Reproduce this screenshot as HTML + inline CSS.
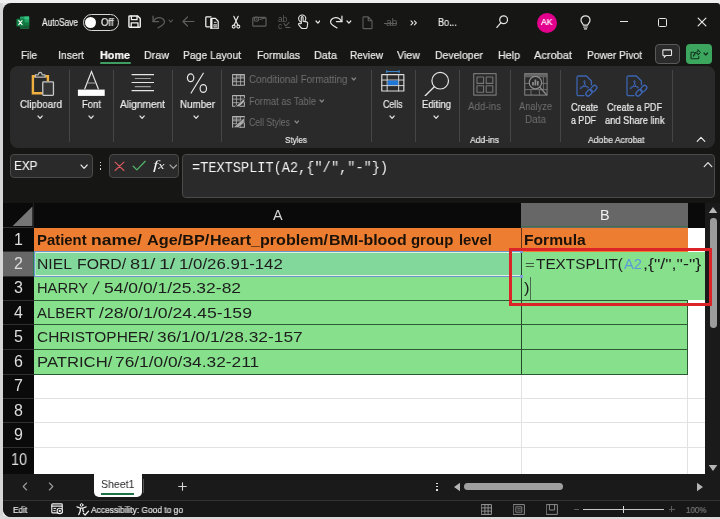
<!DOCTYPE html><html><head><meta charset="utf-8"><title>Excel</title><style>

html,body{margin:0;padding:0;}
body{width:720px;height:519px;overflow:hidden;background:#e6e6e6;position:relative;
font-family:"Liberation Sans",sans-serif;}
#r div,#r svg,#r span.t{position:absolute;box-sizing:border-box;}
#r span.t{white-space:pre;transform-origin:0 50%;display:block;line-height:1;will-change:transform;}

</style></head><body><div id="r">
<div style="left:0px;top:0px;width:720px;height:3px;background:#efefef;"></div>
<div style="left:0px;top:3px;width:3.2px;height:516px;background:#d6d6d6;"></div>
<div style="left:0px;top:516px;width:720px;height:3px;background:#dadada;"></div>
<div style="left:3px;top:2.6px;width:717px;height:514px;background:#161714;border-radius:8px 3px 0 8px;"></div>
<div style="left:10px;top:65.8px;width:705.2px;height:81.8px;background:#2a2a2a;border-radius:8px;"></div>
<div style="left:68.5px;top:70px;width:1px;height:72px;background:#454545;"></div>
<div style="left:113.3px;top:70px;width:1px;height:72px;background:#454545;"></div>
<div style="left:172px;top:70px;width:1px;height:72px;background:#454545;"></div>
<div style="left:221.3px;top:70px;width:1px;height:72px;background:#454545;"></div>
<div style="left:370.5px;top:70px;width:1px;height:72px;background:#454545;"></div>
<div style="left:414.5px;top:70px;width:1px;height:72px;background:#454545;"></div>
<div style="left:459px;top:70px;width:1px;height:72px;background:#454545;"></div>
<div style="left:510px;top:70px;width:1px;height:72px;background:#454545;"></div>
<div style="left:560px;top:70px;width:1px;height:72px;background:#454545;"></div>
<div style="left:672px;top:70px;width:1px;height:72px;background:#454545;"></div>
<div style="left:10px;top:154px;width:82.5px;height:24px;background:#2a2a2a;border:1px solid #4a4a4a;border-radius:4px;"></div>
<div style="left:109px;top:154px;width:70px;height:24px;background:#2a2a2a;border:1px solid #4a4a4a;border-radius:4px;"></div>
<div style="left:182px;top:154px;width:533.2px;height:44px;background:#2a2a2a;border:1px solid #4a4a4a;border-radius:4px;"></div>
<div style="left:99.7px;top:161.6px;width:1.6px;height:1.6px;background:#dcdcdc;"></div>
<div style="left:99.7px;top:164.9px;width:1.6px;height:1.6px;background:#dcdcdc;"></div>
<div style="left:99.7px;top:168.2px;width:1.6px;height:1.6px;background:#dcdcdc;"></div>
<div style="left:3px;top:203px;width:702px;height:24.5px;background:#0a0a0a;"></div>
<div style="left:3px;top:203px;width:31px;height:271px;background:#0a0a0a;"></div>
<div style="left:705px;top:203px;width:15px;height:271px;background:#1a1a1a;"></div>
<svg style="left:11.6px;top:205.6px;" width="21" height="20.4" viewBox="0 0 21 20.4" fill="none" stroke-linecap="round" stroke-linejoin="round"><path d="M20.4 0.4 L20.4 20 L0.6 20 Z" fill="#767676"/></svg>
<div style="left:33px;top:203px;width:1px;height:24.5px;background:#222;"></div>
<div style="left:3px;top:227px;width:31px;height:1px;background:#303030;"></div>
<div style="left:521px;top:203px;width:166.5px;height:24.5px;background:#676767;"></div>
<div style="left:521px;top:226.3px;width:166.5px;height:1.2px;background:#3f6f50;"></div>
<div style="left:3px;top:251.6px;width:31px;height:24.400000000000006px;background:#676767;"></div>
<div style="left:33px;top:251.6px;width:1.2px;height:24.400000000000006px;background:#2f7d4f;"></div>
<div style="left:3px;top:251.1px;width:31px;height:1px;background:#303030;"></div>
<div style="left:3px;top:275.5px;width:31px;height:1px;background:#303030;"></div>
<div style="left:3px;top:299.8px;width:31px;height:1px;background:#303030;"></div>
<div style="left:3px;top:324.3px;width:31px;height:1px;background:#303030;"></div>
<div style="left:3px;top:348.8px;width:31px;height:1px;background:#303030;"></div>
<div style="left:3px;top:373.5px;width:31px;height:1px;background:#303030;"></div>
<div style="left:3px;top:397.8px;width:31px;height:1px;background:#303030;"></div>
<div style="left:3px;top:422.4px;width:31px;height:1px;background:#303030;"></div>
<div style="left:3px;top:446.9px;width:31px;height:1px;background:#303030;"></div>
<div style="left:34px;top:227.5px;width:671px;height:246.5px;background:#fff;"></div>
<div style="left:34px;top:397.8px;width:671px;height:1px;background:#e2e2e2;"></div>
<div style="left:34px;top:422.4px;width:671px;height:1px;background:#e2e2e2;"></div>
<div style="left:34px;top:446.9px;width:671px;height:1px;background:#e2e2e2;"></div>
<div style="left:520.5px;top:374px;width:1px;height:100px;background:#e2e2e2;"></div>
<div style="left:687.0px;top:227.5px;width:1px;height:246.5px;background:#e2e2e2;"></div>
<div style="left:34px;top:227.5px;width:653.5px;height:24.099999999999994px;background:#ed7d31;"></div>
<div style="left:34px;top:251.6px;width:653.5px;height:122.4px;background:#86e08c;"></div>
<div style="left:34px;top:251.6px;width:487px;height:24.400000000000006px;background:#82d79a;"></div>
<div style="left:521px;top:251.6px;width:184px;height:48.70000000000002px;background:#86e08c;"></div>
<div style="left:34px;top:300px;width:653.5px;height:1px;background:#2c5a33;"></div>
<div style="left:34px;top:324.4px;width:653.5px;height:1px;background:#2c5a33;"></div>
<div style="left:34px;top:349px;width:653.5px;height:1px;background:#2c5a33;"></div>
<div style="left:34px;top:373.6px;width:653.5px;height:1px;background:#2c5a33;"></div>
<div style="left:521px;top:251.6px;width:1px;height:122.4px;background:#24482a;"></div>
<div style="left:687px;top:300px;width:1px;height:74.4px;background:#2c5a33;"></div>
<div style="left:34px;top:250.8px;width:487.5px;height:26.4px;border:1.1px solid #6f93cf;border-right:none;"></div>
<div style="left:35px;top:251.9px;width:486px;height:24.2px;border:1px solid rgba(255,255,255,0.72);border-right:none;border-left:1px solid rgba(255,255,255,0.3);"></div>
<div style="left:521px;top:227.5px;width:1px;height:24.099999999999994px;background:#6b3414;"></div>
<div style="left:519.8px;top:250.6px;width:2.8px;height:2.8px;background:#7d9fd6;"></div>
<div style="left:519.8px;top:275.1px;width:2.8px;height:2.8px;background:#7d9fd6;"></div>
<div style="left:530px;top:277px;width:1px;height:23px;background:#4d6b50;"></div>
<div style="left:709.8px;top:217.5px;width:6.8px;height:110px;background:#9c9c9c;border-radius:3.4px;"></div>
<svg style="left:708px;top:206px;" width="10" height="8" viewBox="0 0 10 8" fill="none" stroke-linecap="round" stroke-linejoin="round"><path d="M5 1 L9.3 7 L0.7 7 Z" fill="#b5b5b5"/></svg>
<svg style="left:708px;top:464px;" width="10" height="8" viewBox="0 0 10 8" fill="none" stroke-linecap="round" stroke-linejoin="round"><path d="M5 7 L9.3 1 L0.7 1 Z" fill="#b5b5b5"/></svg>
<div style="left:3px;top:474px;width:717px;height:26.5px;background:#1a1a1a;"></div>
<div style="left:3px;top:500px;width:717px;height:16.6px;background:#171717;border-radius:0 0 0 8px;"></div>
<div style="left:3px;top:500px;width:717px;height:1px;background:#333;"></div>
<div style="left:94px;top:474px;width:47.5px;height:22.5px;background:#fff;border-radius:0 0 5px 5px;"></div>
<div style="left:100.5px;top:493.3px;width:33.5px;height:1.6px;background:#1e7145;"></div>
<div style="left:143px;top:479px;width:1px;height:14px;background:#555;"></div>
<div style="left:464px;top:483px;width:99px;height:7.2px;background:#a0a0a0;border-radius:3.6px;"></div>
<svg style="left:453px;top:482px;" width="8" height="10" viewBox="0 0 8 10" fill="none" stroke-linecap="round" stroke-linejoin="round"><path d="M7 0.7 L7 9.3 L1 5 Z" fill="#b5b5b5"/></svg>
<svg style="left:696px;top:482px;" width="8" height="10" viewBox="0 0 8 10" fill="none" stroke-linecap="round" stroke-linejoin="round"><path d="M1 0.7 L1 9.3 L7 5 Z" fill="#b5b5b5"/></svg>
<div style="left:436.3px;top:482.6px;width:1.6px;height:1.6px;background:#e0e0e0;"></div>
<div style="left:436.3px;top:485.8px;width:1.6px;height:1.6px;background:#e0e0e0;"></div>
<div style="left:436.3px;top:489px;width:1.6px;height:1.6px;background:#e0e0e0;"></div>
<svg style="left:15.6px;top:15.6px;" width="14" height="13.2" viewBox="0 0 15 15" fill="none" stroke-linecap="round" stroke-linejoin="round"><rect x="4" y="0.5" width="10.5" height="14" rx="1.2" fill="#21a366"/><rect x="9.2" y="0.5" width="5.3" height="3.6" fill="#33c481"/><rect x="9.2" y="4.1" width="5.3" height="3.5" fill="#21a366"/><rect x="4" y="4.1" width="5.2" height="3.5" fill="#107c41"/><rect x="4" y="7.6" width="10.5" height="6.9" fill="#185c37"/><rect x="9.2" y="7.6" width="5.3" height="3.4" fill="#107c41"/><rect x="0" y="3" width="9" height="9" rx="1" fill="#107c41"/><path d="M2.6 5.2 L6.4 9.8 M6.4 5.2 L2.6 9.8" stroke="#fff" stroke-width="1.3"/></svg>
<div style="left:83px;top:14px;width:35.5px;height:17px;border:1.2px solid #d8d8d8;border-radius:8.5px;"></div>
<div style="left:85.2px;top:17px;width:11px;height:11px;background:#fff;border-radius:50%;"></div>
<svg style="left:128px;top:15.4px;" width="13.2" height="13.2" viewBox="0 0 14 14" fill="none" stroke-linecap="round" stroke-linejoin="round"><path d="M1 1.8 Q1 1 1.8 1 H10.3 L13 3.7 V12.2 Q13 13 12.2 13 H1.8 Q1 13 1 12.2 Z" stroke="#f2f2f2" stroke-width="1.5"/><path d="M3.6 1.2 V5 H9.6 V1.2" stroke="#f2f2f2" stroke-width="1.4"/><path d="M3.4 13 V8.4 H10.6 V13" stroke="#f2f2f2" stroke-width="1.4"/></svg>
<svg style="left:151px;top:14.4px;" width="15" height="15" viewBox="0 0 15 15" fill="none" stroke-linecap="round" stroke-linejoin="round"><path d="M2.05 2 V7.5 H7.55" stroke="#5e5e5e" stroke-width="1.25" stroke-linejoin="miter"/><path d="M2.3 7.3 C4 4.6 6.4 3.4 8.6 3.6 C12 3.9 14.2 6.6 13.2 9 C12.2 11.2 9.4 12.6 7.1 13.9" stroke="#5e5e5e" stroke-width="1.25"/></svg>
<svg style="left:168.2px;top:19.4px;" width="5.6" height="4" viewBox="0 0 5.6 4" fill="none" stroke-linecap="round" stroke-linejoin="round"><path d="M1 1 L2.8 3 L4.6 1" stroke="#5e5e5e" stroke-width="1.1"/></svg>
<svg style="left:182px;top:16.4px;" width="13" height="11" viewBox="0 0 13 11" fill="none" stroke-linecap="round" stroke-linejoin="round"><path d="M1 5.5 H12 M5.5 1 L1 5.5 L5.5 10" stroke="#5e5e5e" stroke-width="1.2"/></svg>
<svg style="left:205.4px;top:15.7px;" width="14" height="13.6" viewBox="0 0 14 13.6" fill="none" stroke-linecap="round" stroke-linejoin="round"><path d="M6 0.8 H1.6 Q0.8 0.8 0.8 1.6 V10 Q0.8 10.8 1.6 10.8 H4.4" stroke="#f0f0f0" stroke-width="1.25"/><path d="M5.8 3.2 Q5.8 2.4 6.6 2.4 H10.4 L13.2 5.2 V12 Q13.2 12.8 12.4 12.8 H6.6 Q5.8 12.8 5.8 12 Z" stroke="#f0f0f0" stroke-width="1.25" fill="#161714"/><rect x="5.8" y="2.6" width="1.7" height="10" fill="#f0f0f0"/><path d="M9.4 6.3 H11.2" stroke="#e0e0e0" stroke-width="1"/><rect x="8.4" y="8.3" width="3.6" height="3.2" fill="#dcdcdc"/><path d="M8.4 9.9 H12" stroke="#333" stroke-width="0.8" stroke-linecap="butt"/></svg>
<svg style="left:230.8px;top:15.0px;" width="10" height="14.5" viewBox="0 0 10 14.5" fill="none" stroke-linecap="round" stroke-linejoin="round"><path d="M2.9 1.4 L6.7 9.8 M7.1 1.4 L3.3 9.8" stroke="#e6e6e6" stroke-width="1.2"/><circle cx="2.7" cy="11.6" r="1.5" stroke="#e6e6e6" stroke-width="1.1"/><circle cx="7.3" cy="11.6" r="1.5" stroke="#e6e6e6" stroke-width="1.1"/></svg>
<svg style="left:252px;top:15.4px;" width="15" height="12" viewBox="0 0 15 12" fill="none" stroke-linecap="round" stroke-linejoin="round"><rect x="0.8" y="2.4" width="13.2" height="8.8" rx="1" stroke="#5e5e5e" stroke-width="1.2"/><path d="M8 4.5 L13.5 2.8" stroke="#5e5e5e" stroke-width="1.1"/><circle cx="4.4" cy="4.2" r="2.1" stroke="#5e5e5e" stroke-width="1.1" fill="#161714"/><circle cx="4.4" cy="4.2" r="0.7" fill="#5e5e5e"/></svg>
<span class="t" style="left:278px;top:15px;font-size:8.5px;color:#5e5e5e;letter-spacing:-0.2px">ab</span>
<span class="t" style="left:278px;top:22px;font-size:8.5px;color:#5e5e5e">c</span>
<svg style="left:283px;top:21.4px;" width="8" height="8" viewBox="0 0 8 8" fill="none" stroke-linecap="round" stroke-linejoin="round"><path d="M1 2.5 L2.8 5 L6 1.5 M3 6.5 H7" stroke="#5e5e5e" stroke-width="1.1"/></svg>
<svg style="left:297px;top:13.9px;" width="12" height="15.5" viewBox="0 0 12 15.5" fill="none" stroke-linecap="round" stroke-linejoin="round"><circle cx="5.2" cy="4.6" r="3.6" stroke="#e6e6e6" stroke-width="1.1"/><path d="M4.3 9.5 V3.6 Q4.3 2.6 5.2 2.6 Q6.1 2.6 6.1 3.6 V7.2 L9.6 7.9 Q10.8 8.2 10.7 9.4 L10.2 13 Q10 14.6 8.4 14.6 H6 Q4.8 14.6 4 13.6 L1.6 10.6 Q1.2 9.8 2 9.4 Q2.8 9.1 3.4 9.8 Z" stroke="#e6e6e6" stroke-width="1.1" fill="#161714"/></svg>
<svg style="left:314.6px;top:19.85px;" width="5.8" height="4.1" viewBox="0 0 5.8 4.1" fill="none" stroke-linecap="round" stroke-linejoin="round"><path d="M1 1 L2.9 3.1 L4.8 1" stroke="#e6e6e6" stroke-width="1.2"/></svg>
<svg style="left:329px;top:14.4px;" width="15" height="15" viewBox="0 0 15 15" fill="none" stroke-linecap="round" stroke-linejoin="round"><path d="M12.95 2 V7.5 H7.45" stroke="#e6e6e6" stroke-width="1.25" stroke-linejoin="miter"/><path d="M12.7 7.3 C11 4.6 8.6 3.4 6.4 3.6 C3 3.9 0.8 6.6 1.8 9 C2.8 11.2 5.6 12.6 7.9 13.9" stroke="#e6e6e6" stroke-width="1.25"/></svg>
<svg style="left:346.1px;top:19.85px;" width="5.8" height="4.1" viewBox="0 0 5.8 4.1" fill="none" stroke-linecap="round" stroke-linejoin="round"><path d="M1 1 L2.9 3.1 L4.8 1" stroke="#e6e6e6" stroke-width="1.2"/></svg>
<svg style="left:361.6px;top:16.0px;" width="11" height="13.5" viewBox="0 0 11 13.5" fill="none" stroke-linecap="round" stroke-linejoin="round"><path d="M1 1.6 Q1 0.9 1.7 0.9 H6.2 L10 4.8 V11.9 Q10 12.6 9.3 12.6 H1.7 Q1 12.6 1 11.9 Z M6.2 0.9 V4.8 H10" stroke="#5e5e5e" stroke-width="1.1"/></svg>
<span class="t" style="left:386px;top:17.4px;font-size:10.5px;color:#5e5e5e;letter-spacing:-0.3px">ab</span>
<div style="left:384px;top:23px;width:13px;height:1px;background:#5e5e5e;"></div>
<svg style="left:410px;top:20.1px;" width="8" height="6" viewBox="0 0 8 6" fill="none" stroke-linecap="round" stroke-linejoin="round"><path d="M1 0.9 L3 2.9 L1 4.9 M4.4 0.9 L6.4 2.9 L4.4 4.9" stroke="#e6e6e6" stroke-width="1.1"/></svg>
<svg style="left:495.5px;top:14.9px;" width="12.5" height="13.5" viewBox="0 0 12.5 13.5" fill="none" stroke-linecap="round" stroke-linejoin="round"><circle cx="7.6" cy="4.8" r="3.9" stroke="#e6e6e6" stroke-width="1.2"/><path d="M4.8 7.8 L0.9 12.4" stroke="#e6e6e6" stroke-width="1.3"/></svg>
<div style="left:537px;top:12.5px;width:20px;height:20px;background:#e3008c;border-radius:50%;"></div>
<svg style="left:579.6px;top:14.6px;" width="11" height="15" viewBox="0 0 11 15" fill="none" stroke-linecap="round" stroke-linejoin="round"><path d="M3.4 10.2 C3.2 8.6 1 7.6 1 5.2 C1 2.6 3 0.8 5.5 0.8 C8 0.8 10 2.6 10 5.2 C10 7.6 7.8 8.6 7.6 10.2 Z" stroke="#e6e6e6" stroke-width="1.2"/><path d="M3.6 12 H7.4 M4.4 13.9 H6.6" stroke="#e6e6e6" stroke-width="1.1"/></svg>
<div style="left:619.7px;top:21.1px;width:8.4px;height:1.2px;background:#e6e6e6;"></div>
<div style="left:658.2px;top:17.6px;width:9.3px;height:9.3px;border:1.3px solid #e6e6e6;border-radius:1.6px;"></div>
<svg style="left:697.3px;top:17.3px;" width="10" height="10" viewBox="0 0 10 10" fill="none" stroke-linecap="round" stroke-linejoin="round"><path d="M1.1 1.1 L8.9 8.9 M8.9 1.1 L1.1 8.9" stroke="#e6e6e6" stroke-width="1.25"/></svg>
<div style="left:100px;top:62px;width:30.5px;height:1.8px;background:#3f9f63;border-radius:1px;"></div>
<div style="left:654.5px;top:44px;width:25.5px;height:19.5px;background:#2b2b2b;border:1px solid #5a5a5a;border-radius:4px;"></div>
<svg style="left:662.2px;top:49px;" width="10.4" height="9.6" viewBox="0 0 12 11" fill="none" stroke-linecap="round" stroke-linejoin="round"><path d="M1.6 1 H10.4 Q11 1 11 1.6 V6.8 Q11 7.4 10.4 7.4 H4.6 L2.6 9.6 V7.4 H1.6 Q1 7.4 1 6.8 V1.6 Q1 1 1.6 1 Z" stroke="#e6e6e6" stroke-width="1.25"/></svg>
<div style="left:686px;top:44px;width:26px;height:19.6px;background:#3ca65e;border-radius:4px;"></div>
<svg style="left:690px;top:47.5px;" width="11" height="12" viewBox="0 0 11 12" fill="none" stroke-linecap="round" stroke-linejoin="round"><path d="M4.2 4.2 H1.8 Q1 4.2 1 5 V10 Q1 10.8 1.8 10.8 H8 Q8.8 10.8 8.8 10 V8.6" stroke="#12301d" stroke-width="1.1"/><path d="M3.6 8 C3.8 5.2 5.4 3.8 8 3.8 V1.6 L10.4 4.4 L8 7.2 V5.2 C5.8 5.2 4.6 6 3.6 8 Z" stroke="#12301d" stroke-width="1" /></svg>
<svg style="left:703.2px;top:52.0px;" width="5.6" height="4" viewBox="0 0 5.6 4" fill="none" stroke-linecap="round" stroke-linejoin="round"><path d="M1 1 L2.8 3 L4.6 1" stroke="#12301d" stroke-width="1.2"/></svg>
<svg style="left:31px;top:71px;" width="24" height="26" viewBox="0 0 24 26" fill="none" stroke-linecap="round" stroke-linejoin="round"><path d="M4.4 5.2 H1.9 V22.3 H11.2" stroke="#f0b040" stroke-width="2.4" stroke-linecap="butt" stroke-linejoin="miter"/><path d="M14.2 5.2 H16.9 V10.2" stroke="#f0b040" stroke-width="2.4" stroke-linecap="butt" stroke-linejoin="miter"/><path d="M4.4 6.2 V3.8 H7.3 Q7.5 1.4 9.2 1.4 Q10.9 1.4 11.1 3.8 H14 V6.2 Z" stroke="#bdbdbd" stroke-width="1.2" fill="#2a2a2a"/><rect x="11.75" y="10.95" width="10.7" height="13.4" rx="0.8" stroke="#c9c9c9" stroke-width="1.3" fill="#343434"/></svg>
<svg style="left:36.9px;top:115.35px;" width="6.2" height="4.3" viewBox="0 0 6.2 4.3" fill="none" stroke-linecap="round" stroke-linejoin="round"><path d="M1 1 L3.1 3.3 L5.2 1" stroke="#dcdcdc" stroke-width="1.2"/></svg>
<svg style="left:77px;top:70px;" width="29" height="27" viewBox="0 0 29 27" fill="none" stroke-linecap="round" stroke-linejoin="round"><path d="M7.8 18.8 L14.5 1.6 L21.3 18.8" stroke="#e6e6e6" stroke-width="1.2" stroke-linejoin="miter"/><path d="M10.4 13 H18.6" stroke="#a8a8a8" stroke-width="1.1"/><rect x="0.9" y="19.6" width="26.8" height="6.3" fill="#fff"/></svg>
<svg style="left:87.9px;top:115.35px;" width="6.2" height="4.3" viewBox="0 0 6.2 4.3" fill="none" stroke-linecap="round" stroke-linejoin="round"><path d="M1 1 L3.1 3.3 L5.2 1" stroke="#dcdcdc" stroke-width="1.2"/></svg>
<svg style="left:131px;top:73px;" width="24" height="19" viewBox="0 0 24 19" fill="none" stroke-linecap="round" stroke-linejoin="round"><path d="M0.6 1.6 H23 M0.6 9.5 H23 M0.6 17.6 H23" stroke="#e6e6e6" stroke-width="1.2" stroke-linecap="butt"/><path d="M3.8 5.5 H19.8 M3.8 13.6 H19.8" stroke="#9c9c9c" stroke-width="1.2" stroke-linecap="butt"/></svg>
<svg style="left:138.9px;top:115.35px;" width="6.2" height="4.3" viewBox="0 0 6.2 4.3" fill="none" stroke-linecap="round" stroke-linejoin="round"><path d="M1 1 L3.1 3.3 L5.2 1" stroke="#dcdcdc" stroke-width="1.2"/></svg>
<svg style="left:186px;top:72px;" width="22" height="22" viewBox="0 0 22 22" fill="none" stroke-linecap="round" stroke-linejoin="round"><ellipse cx="4.6" cy="5.8" rx="3.2" ry="3.9" stroke="#e6e6e6" stroke-width="1.2"/><ellipse cx="17.3" cy="16.5" rx="3.2" ry="3.9" stroke="#e6e6e6" stroke-width="1.2"/><path d="M17.3 1.2 L5.1 21" stroke="#e6e6e6" stroke-width="1.2"/></svg>
<svg style="left:193.3px;top:115.35px;" width="6.2" height="4.3" viewBox="0 0 6.2 4.3" fill="none" stroke-linecap="round" stroke-linejoin="round"><path d="M1 1 L3.1 3.3 L5.2 1" stroke="#dcdcdc" stroke-width="1.2"/></svg>
<svg style="left:232px;top:73.5px;" width="13" height="12" viewBox="0 0 13 12" fill="none" stroke-linecap="round" stroke-linejoin="round"><rect x="0.6" y="0.6" width="11.8" height="10.6" stroke="#b2b2b2" stroke-width="1.05"/><path d="M0.6 4.1 H12.4 M0.6 7.7 H12.4 M4.4 0.6 V11.2 M8.6 0.6 V11.2" stroke="#b2b2b2" stroke-width="0.8"/><rect x="4.4" y="0.6" width="8" height="3.5" fill="#b2b2b2" fill-opacity="0.35"/><rect x="0.6" y="4.1" width="3.8" height="3.6" fill="#b2b2b2" fill-opacity="0.35"/></svg>
<svg style="left:232px;top:95px;" width="13" height="12" viewBox="0 0 13 12" fill="none" stroke-linecap="round" stroke-linejoin="round"><rect x="0.6" y="0.6" width="11.8" height="10.6" stroke="#b2b2b2" stroke-width="1.05"/><path d="M0.6 4.1 H12.4 M0.6 7.7 H12.4 M4.4 0.6 V11.2 M8.6 0.6 V11.2" stroke="#b2b2b2" stroke-width="0.8"/><path d="M3.6 11.4 L12.6 3.2 V6.8 L7.6 11.4 Z" fill="#b2b2b2" stroke="#2a2a2a" stroke-width="0.7"/></svg>
<svg style="left:232px;top:116px;" width="13" height="12" viewBox="0 0 13 12" fill="none" stroke-linecap="round" stroke-linejoin="round"><rect x="0.6" y="0.6" width="11.8" height="10.6" stroke="#b2b2b2" stroke-width="1.05"/><path d="M0.6 4.1 H12.4 M0.6 7.7 H12.4 M4.4 0.6 V11.2 M8.6 0.6 V11.2" stroke="#b2b2b2" stroke-width="0.8"/><path d="M1.4 11.2 L12.4 1.6 V6.6 L7 11.2 Z" fill="#b2b2b2" fill-opacity="0.9" stroke="#2a2a2a" stroke-width="0.7"/><rect x="1" y="1" width="7" height="5" fill="#b2b2b2" fill-opacity="0.3"/></svg>
<svg style="left:351.2px;top:77.0px;" width="5.6" height="4" viewBox="0 0 5.6 4" fill="none" stroke-linecap="round" stroke-linejoin="round"><path d="M1 1 L2.8 3 L4.6 1" stroke="#858585" stroke-width="1.2"/></svg>
<svg style="left:318.5px;top:98.5px;" width="5.6" height="4" viewBox="0 0 5.6 4" fill="none" stroke-linecap="round" stroke-linejoin="round"><path d="M1 1 L2.8 3 L4.6 1" stroke="#858585" stroke-width="1.2"/></svg>
<svg style="left:293.5px;top:119.5px;" width="5.6" height="4" viewBox="0 0 5.6 4" fill="none" stroke-linecap="round" stroke-linejoin="round"><path d="M1 1 L2.8 3 L4.6 1" stroke="#858585" stroke-width="1.2"/></svg>
<svg style="left:381.2px;top:70.4px;" width="24" height="22.2" viewBox="0 0 25 23" fill="none" stroke-linecap="round" stroke-linejoin="round"><path d="M6 1.6 H18.8 M6 0.4 V2.8 M18.8 0.4 V2.8" stroke="#3c8fe0" stroke-width="1"/><rect x="0.8" y="4.8" width="23" height="17" stroke="#dcdcdc" stroke-width="1.2"/><path d="M0.8 10.4 H23.8 M0.8 16.2 H23.8 M6.4 4.8 V21.8 M18.4 4.8 V21.8" stroke="#dcdcdc" stroke-width="1"/><rect x="6.9" y="10.9" width="11" height="4.8" fill="#1f78d8"/></svg>
<svg style="left:389.4px;top:115.35px;" width="6.2" height="4.3" viewBox="0 0 6.2 4.3" fill="none" stroke-linecap="round" stroke-linejoin="round"><path d="M1 1 L3.1 3.3 L5.2 1" stroke="#dcdcdc" stroke-width="1.2"/></svg>
<svg style="left:424px;top:70.5px;" width="26" height="25.5" viewBox="0 0 26 25.5" fill="none" stroke-linecap="round" stroke-linejoin="round"><circle cx="16.2" cy="9.7" r="8.3" stroke="#e6e6e6" stroke-width="1.2"/><path d="M10.3 15.8 L1.2 24.8" stroke="#e6e6e6" stroke-width="1.3"/></svg>
<svg style="left:433.2px;top:115.35px;" width="6.2" height="4.3" viewBox="0 0 6.2 4.3" fill="none" stroke-linecap="round" stroke-linejoin="round"><path d="M1 1 L3.1 3.3 L5.2 1" stroke="#dcdcdc" stroke-width="1.2"/></svg>
<svg style="left:473px;top:73px;" width="24" height="23" viewBox="0 0 24 23" fill="none" stroke-linecap="round" stroke-linejoin="round"><rect x="0.7" y="0.7" width="22.4" height="21.4" stroke="#767676" stroke-width="1.2"/><rect x="4" y="4" width="6.6" height="6.4" stroke="#767676" stroke-width="1.1"/><rect x="13.2" y="4" width="6.6" height="6.4" stroke="#767676" stroke-width="1.1"/><rect x="4" y="12.8" width="6.6" height="6.4" stroke="#767676" stroke-width="1.1"/><rect x="13.2" y="12.8" width="6.6" height="6.4" stroke="#767676" stroke-width="1.1"/></svg>
<svg style="left:524px;top:73px;" width="24" height="23" viewBox="0 0 24 23" fill="none" stroke-linecap="round" stroke-linejoin="round"><rect x="0.7" y="0.7" width="22.4" height="21.4" stroke="#767676" stroke-width="1.2"/><rect x="0.7" y="0.7" width="22.4" height="3.6" fill="#767676" fill-opacity="0.75"/><path d="M0.7 10.4 H23 M0.7 16.6 H23 M7 16.6 V22 M15.4 16.6 V22 M19.4 4.4 V16.6" stroke="#767676" stroke-width="0.9"/><circle cx="11.4" cy="9.6" r="6.2" stroke="#8c8c8c" stroke-width="1.2" fill="#2a2a2a"/><path d="M9 12.4 V9 M11.4 12.4 V6.4 M13.8 12.4 V8" stroke="#8c8c8c" stroke-width="1.7" stroke-linecap="butt"/><path d="M15.8 14.2 L22.4 21.6" stroke="#8c8c8c" stroke-width="1.4"/></svg>
<svg style="left:575.6px;top:75px;" width="22" height="24.5" viewBox="0 0 22 24.5" fill="none" stroke-linecap="round" stroke-linejoin="round"><path d="M8 20.6 H2.4 Q1 20.6 1 19.2 V2.4 Q1 1 2.4 1 H10.4 L15.4 6 V9.8" stroke="#3c64b0" stroke-width="1.3"/><path d="M8.2 7.2 C7 5.2 9.6 4.6 9 7.4 C8.4 10 6.6 12.6 5 13.6 C3.6 14.4 3.4 12.6 5.4 12 C7.6 11.4 10.6 11.2 12 12 C13.2 12.8 12.2 13.6 11 12.6 C9.6 11.4 8.8 9 8.2 7.2 Z" stroke="#3c64b0" stroke-width="1"/><rect x="9.4" y="15.6" width="7.2" height="4.4" rx="2.2" transform="rotate(-48 13 17.8)" stroke="#3c64b0" stroke-width="1.4"/><rect x="14" y="11.6" width="7.2" height="4.4" rx="2.2" transform="rotate(-48 17.4 13.6)" stroke="#3c64b0" stroke-width="1.4"/></svg>
<svg style="left:626px;top:75px;" width="22" height="24.5" viewBox="0 0 22 24.5" fill="none" stroke-linecap="round" stroke-linejoin="round"><path d="M8 20.6 H2.4 Q1 20.6 1 19.2 V2.4 Q1 1 2.4 1 H10.4 L15.4 6 V9.8" stroke="#3c64b0" stroke-width="1.3"/><path d="M8.2 7.2 C7 5.2 9.6 4.6 9 7.4 C8.4 10 6.6 12.6 5 13.6 C3.6 14.4 3.4 12.6 5.4 12 C7.6 11.4 10.6 11.2 12 12 C13.2 12.8 12.2 13.6 11 12.6 C9.6 11.4 8.8 9 8.2 7.2 Z" stroke="#3c64b0" stroke-width="1"/><rect x="9.4" y="15.6" width="7.2" height="4.4" rx="2.2" transform="rotate(-48 13 17.8)" stroke="#3c64b0" stroke-width="1.4"/><rect x="14" y="11.6" width="7.2" height="4.4" rx="2.2" transform="rotate(-48 17.4 13.6)" stroke="#3c64b0" stroke-width="1.4"/></svg>
<svg style="left:696.3px;top:135.7px;" width="10" height="7" viewBox="0 0 10 7" fill="none" stroke-linecap="round" stroke-linejoin="round"><path d="M1.2 5.4 L5 1.4 L8.8 5.4" stroke="#e6e6e6" stroke-width="1.2"/></svg>
<svg style="left:79.7px;top:164.35px;" width="8.2" height="5.3" viewBox="0 0 8.2 5.3" fill="none" stroke-linecap="round" stroke-linejoin="round"><path d="M1 1 L4.1 4.3 L7.2 1" stroke="#e6e6e6" stroke-width="1.15"/></svg>
<svg style="left:113.6px;top:160.8px;" width="11" height="10.6" viewBox="0 0 11 10.6" fill="none" stroke-linecap="round" stroke-linejoin="round"><path d="M1.1 1.1 L9.9 9.5 M9.9 1.1 L1.1 9.5" stroke="#d95a5f" stroke-width="1.15"/></svg>
<svg style="left:131.6px;top:160px;" width="14.5" height="11" viewBox="0 0 14.5 11" fill="none" stroke-linecap="round" stroke-linejoin="round"><path d="M1.2 6.2 L4.9 9.9 L13.2 1.3" stroke="#52b56a" stroke-width="1.25"/></svg>
<svg style="left:168.6px;top:163.7px;" width="8.6" height="5.4" viewBox="0 0 8.6 5.4" fill="none" stroke-linecap="round" stroke-linejoin="round"><path d="M1 1 L4.3 4.4 L7.6 1" stroke="#a8a8a8" stroke-width="1.1"/></svg>
<svg style="left:702.5px;top:161px;" width="10" height="7" viewBox="0 0 10 7" fill="none" stroke-linecap="round" stroke-linejoin="round"><path d="M1.2 5.6 L5 1.6 L8.8 5.6" stroke="#e6e6e6" stroke-width="1.2"/></svg>
<svg style="left:21.6px;top:482px;" width="6" height="9" viewBox="0 0 6 9" fill="none" stroke-linecap="round" stroke-linejoin="round"><path d="M4.6 1 L1.2 4.5 L4.6 8" stroke="#9a9a9a" stroke-width="1.15"/></svg>
<svg style="left:48.2px;top:482px;" width="6" height="9" viewBox="0 0 6 9" fill="none" stroke-linecap="round" stroke-linejoin="round"><path d="M1.4 1 L4.8 4.5 L1.4 8" stroke="#9a9a9a" stroke-width="1.15"/></svg>
<svg style="left:178.3px;top:481.8px;" width="9" height="9" viewBox="0 0 9 9" fill="none" stroke-linecap="round" stroke-linejoin="round"><path d="M4.5 0.7 V8.3 M0.7 4.5 H8.3" stroke="#d6d6d6" stroke-width="1.1"/></svg>
<svg style="left:50.6px;top:503.4px;" width="13" height="12" viewBox="0 0 13 12" fill="none" stroke-linecap="round" stroke-linejoin="round"><rect x="0.8" y="0.8" width="10.4" height="9" rx="0.8" stroke="#f0f0f0" stroke-width="1.15"/><path d="M0.8 3.1 H11.2" stroke="#f0f0f0" stroke-width="1.1"/><path d="M2.8 5.4 H4.8 M2.8 7.6 H4.2" stroke="#f0f0f0" stroke-width="1"/><circle cx="8.8" cy="7.9" r="2.7" stroke="#f0f0f0" stroke-width="1.1" fill="#171717"/><circle cx="8.8" cy="7.9" r="1.1" fill="#f0f0f0"/></svg>
<svg style="left:75.6px;top:502.6px;" width="14" height="13" viewBox="0 0 14 13" fill="none" stroke-linecap="round" stroke-linejoin="round"><circle cx="5.6" cy="2" r="1.35" stroke="#f0f0f0" stroke-width="1"/><path d="M1 3.8 L4.2 5 H7 L10.2 3.8 M4.3 5.2 V8 L2.8 11.6 M6.9 5.2 V7.4 L7.6 8.8" stroke="#f0f0f0" stroke-width="1.25"/><path d="M7.4 10.4 L9.1 12 L12.6 8.2" stroke="#f0f0f0" stroke-width="1.25"/></svg>
<svg style="left:481px;top:503.7px;" width="11" height="11" viewBox="0 0 11 11" fill="none" stroke-linecap="round" stroke-linejoin="round"><rect x="0.6" y="0.6" width="9.8" height="9.8" stroke="#9a9a9a" stroke-width="1"/><path d="M0.6 3.9 H10.4 M0.6 7.1 H10.4 M3.9 0.6 V10.4 M7.1 0.6 V10.4" stroke="#9a9a9a" stroke-width="0.9"/></svg>
<svg style="left:513px;top:503.7px;" width="12" height="11" viewBox="0 0 12 11" fill="none" stroke-linecap="round" stroke-linejoin="round"><rect x="0.6" y="0.6" width="10.8" height="9.8" stroke="#8a8a8a" stroke-width="1"/><rect x="3.2" y="2.8" width="5.6" height="5.4" stroke="#8a8a8a" stroke-width="0.9"/><path d="M4.6 4.6 H7.4 M4.6 6.2 H7.4" stroke="#8a8a8a" stroke-width="0.7"/></svg>
<svg style="left:546px;top:503.7px;" width="12" height="11" viewBox="0 0 12 11" fill="none" stroke-linecap="round" stroke-linejoin="round"><rect x="0.6" y="0.6" width="10.8" height="9.8" stroke="#8a8a8a" stroke-width="1"/><path d="M3.4 0.6 V6 H8.6 V0.6" stroke="#8a8a8a" stroke-width="1"/></svg>
<div style="left:573.5px;top:508.6px;width:5.5px;height:1px;background:#5c5c5c;"></div>
<div style="left:583px;top:508.5px;width:81px;height:1.2px;background:#c8c8c8;"></div>
<div style="left:622.8px;top:505.5px;width:1.2px;height:7px;background:#d8d8d8;"></div>
<div style="left:668.5px;top:508.6px;width:6px;height:1px;background:#5c5c5c;"></div>
<div style="left:671px;top:506px;width:1px;height:6px;background:#5c5c5c;"></div>
<svg style="left:91px;top:280px;" width="10" height="16" viewBox="0 0 10 16" fill="none" stroke-linecap="round" stroke-linejoin="round"><path d="M1.9 14.2 L8.1 1.6" stroke="#1d1d1d" stroke-width="1.15" stroke-linecap="butt"/></svg>
<div style="left:509px;top:248.3px;width:202.6px;height:57.8px;border:3px solid #dc2428;"></div>
<span class="t" style="left:42.2px;top:18.10px;font-size:10px;color:#ececec;font-weight:400;font-family:'Liberation Sans',sans-serif;font-style:normal;transform:scaleX(0.8300);-webkit-text-stroke:0.22px #ececec;">AutoSave</span>
<span class="t" style="left:101px;top:18.10px;font-size:10px;color:#ececec;font-weight:400;font-family:'Liberation Sans',sans-serif;font-style:normal;transform:scaleX(0.9501);-webkit-text-stroke:0.22px #ececec;">Off</span>
<span class="t" style="left:437.5px;top:16.90px;font-size:11.4px;color:#ececec;font-weight:400;font-family:'Liberation Sans',sans-serif;font-style:normal;transform:scaleX(0.8021);-webkit-text-stroke:0.22px #ececec;">Bo...</span>
<span class="t" style="left:541.3px;top:18.40px;font-size:9px;color:#fff;font-weight:400;font-family:'Liberation Sans',sans-serif;font-style:normal;transform:scaleX(0.9488);-webkit-text-stroke:0.22px #fff;">AK</span>
<span class="t" style="left:21px;top:49.20px;font-size:11.6px;color:#ececec;font-weight:400;font-family:'Liberation Sans',sans-serif;font-style:normal;transform:scaleX(0.8562);-webkit-text-stroke:0.22px #ececec;">File</span>
<span class="t" style="left:58px;top:49.20px;font-size:11.6px;color:#ececec;font-weight:400;font-family:'Liberation Sans',sans-serif;font-style:normal;transform:scaleX(0.8966);-webkit-text-stroke:0.22px #ececec;">Insert</span>
<span class="t" style="left:144px;top:49.20px;font-size:11.6px;color:#ececec;font-weight:400;font-family:'Liberation Sans',sans-serif;font-style:normal;transform:scaleX(0.9238);-webkit-text-stroke:0.22px #ececec;">Draw</span>
<span class="t" style="left:183px;top:49.20px;font-size:11.6px;color:#ececec;font-weight:400;font-family:'Liberation Sans',sans-serif;font-style:normal;transform:scaleX(0.8908);-webkit-text-stroke:0.22px #ececec;">Page Layout</span>
<span class="t" style="left:257px;top:49.20px;font-size:11.6px;color:#ececec;font-weight:400;font-family:'Liberation Sans',sans-serif;font-style:normal;transform:scaleX(0.8898);-webkit-text-stroke:0.22px #ececec;">Formulas</span>
<span class="t" style="left:314px;top:49.20px;font-size:11.6px;color:#ececec;font-weight:400;font-family:'Liberation Sans',sans-serif;font-style:normal;transform:scaleX(0.9388);-webkit-text-stroke:0.22px #ececec;">Data</span>
<span class="t" style="left:350px;top:49.20px;font-size:11.6px;color:#ececec;font-weight:400;font-family:'Liberation Sans',sans-serif;font-style:normal;transform:scaleX(0.8681);-webkit-text-stroke:0.22px #ececec;">Review</span>
<span class="t" style="left:397px;top:49.20px;font-size:11.6px;color:#ececec;font-weight:400;font-family:'Liberation Sans',sans-serif;font-style:normal;transform:scaleX(0.9229);-webkit-text-stroke:0.22px #ececec;">View</span>
<span class="t" style="left:435px;top:49.20px;font-size:11.6px;color:#ececec;font-weight:400;font-family:'Liberation Sans',sans-serif;font-style:normal;transform:scaleX(0.9081);-webkit-text-stroke:0.22px #ececec;">Developer</span>
<span class="t" style="left:498px;top:49.20px;font-size:11.6px;color:#ececec;font-weight:400;font-family:'Liberation Sans',sans-serif;font-style:normal;transform:scaleX(0.9221);-webkit-text-stroke:0.22px #ececec;">Help</span>
<span class="t" style="left:534px;top:49.20px;font-size:11.6px;color:#ececec;font-weight:400;font-family:'Liberation Sans',sans-serif;font-style:normal;transform:scaleX(0.9507);-webkit-text-stroke:0.22px #ececec;">Acrobat</span>
<span class="t" style="left:587px;top:49.20px;font-size:11.6px;color:#ececec;font-weight:400;font-family:'Liberation Sans',sans-serif;font-style:normal;transform:scaleX(0.8891);-webkit-text-stroke:0.22px #ececec;">Power Pivot</span>
<span class="t" style="left:100px;top:48.95px;font-size:11.6px;color:#fff;font-weight:700;font-family:'Liberation Sans',sans-serif;font-style:normal;transform:scaleX(0.9311);-webkit-text-stroke:0.22px #fff;">Home</span>
<span class="t" style="left:19.5px;top:99.10px;font-size:10.8px;color:#ececec;font-weight:400;font-family:'Liberation Sans',sans-serif;font-style:normal;transform:scaleX(0.9087);-webkit-text-stroke:0.22px #ececec;">Clipboard</span>
<span class="t" style="left:82px;top:99.10px;font-size:10.8px;color:#ececec;font-weight:400;font-family:'Liberation Sans',sans-serif;font-style:normal;transform:scaleX(0.8792);-webkit-text-stroke:0.22px #ececec;">Font</span>
<span class="t" style="left:120px;top:99.10px;font-size:10.8px;color:#ececec;font-weight:400;font-family:'Liberation Sans',sans-serif;font-style:normal;transform:scaleX(0.9372);-webkit-text-stroke:0.22px #ececec;">Alignment</span>
<span class="t" style="left:179.5px;top:99.10px;font-size:10.8px;color:#ececec;font-weight:400;font-family:'Liberation Sans',sans-serif;font-style:normal;transform:scaleX(0.9113);-webkit-text-stroke:0.22px #ececec;">Number</span>
<span class="t" style="left:383px;top:99.10px;font-size:10.8px;color:#ececec;font-weight:400;font-family:'Liberation Sans',sans-serif;font-style:normal;transform:scaleX(0.8125);-webkit-text-stroke:0.22px #ececec;">Cells</span>
<span class="t" style="left:422px;top:99.10px;font-size:10.8px;color:#ececec;font-weight:400;font-family:'Liberation Sans',sans-serif;font-style:normal;transform:scaleX(0.8784);-webkit-text-stroke:0.22px #ececec;">Editing</span>
<span class="t" style="left:468px;top:100.60px;font-size:10.8px;color:#6f6f6f;font-weight:400;font-family:'Liberation Sans',sans-serif;font-style:normal;transform:scaleX(0.9014);">Add-ins</span>
<span class="t" style="left:519px;top:101.10px;font-size:10.8px;color:#6f6f6f;font-weight:400;font-family:'Liberation Sans',sans-serif;font-style:normal;transform:scaleX(0.8589);">Analyze</span>
<span class="t" style="left:525px;top:114.10px;font-size:10.8px;color:#6f6f6f;font-weight:400;font-family:'Liberation Sans',sans-serif;font-style:normal;transform:scaleX(0.9205);">Data</span>
<span class="t" style="left:570.5px;top:101.60px;font-size:10.8px;color:#ececec;font-weight:400;font-family:'Liberation Sans',sans-serif;font-style:normal;transform:scaleX(0.8328);-webkit-text-stroke:0.22px #ececec;">Create</span>
<span class="t" style="left:571px;top:114.60px;font-size:10.8px;color:#ececec;font-weight:400;font-family:'Liberation Sans',sans-serif;font-style:normal;transform:scaleX(0.8167);-webkit-text-stroke:0.22px #ececec;">a PDF</span>
<span class="t" style="left:607px;top:101.60px;font-size:10.8px;color:#ececec;font-weight:400;font-family:'Liberation Sans',sans-serif;font-style:normal;transform:scaleX(0.8331);-webkit-text-stroke:0.22px #ececec;">Create a PDF</span>
<span class="t" style="left:604.5px;top:114.60px;font-size:10.8px;color:#ececec;font-weight:400;font-family:'Liberation Sans',sans-serif;font-style:normal;transform:scaleX(0.8619);-webkit-text-stroke:0.22px #ececec;">and Share link</span>
<span class="t" style="left:249px;top:74.10px;font-size:10.8px;color:#6f6f6f;font-weight:400;font-family:'Liberation Sans',sans-serif;font-style:normal;transform:scaleX(0.9068);">Conditional Formatting</span>
<span class="t" style="left:249px;top:95.60px;font-size:10.8px;color:#6f6f6f;font-weight:400;font-family:'Liberation Sans',sans-serif;font-style:normal;transform:scaleX(0.8677);">Format as Table</span>
<span class="t" style="left:249px;top:116.60px;font-size:10.8px;color:#6f6f6f;font-weight:400;font-family:'Liberation Sans',sans-serif;font-style:normal;transform:scaleX(0.8037);">Cell Styles</span>
<span class="t" style="left:285px;top:135.40px;font-size:9.8px;color:#e4e4e4;font-weight:400;font-family:'Liberation Sans',sans-serif;font-style:normal;transform:scaleX(0.8244);-webkit-text-stroke:0.22px #e4e4e4;">Styles</span>
<span class="t" style="left:470px;top:135.40px;font-size:9.8px;color:#e4e4e4;font-weight:400;font-family:'Liberation Sans',sans-serif;font-style:normal;transform:scaleX(0.8730);-webkit-text-stroke:0.22px #e4e4e4;">Add-ins</span>
<span class="t" style="left:588px;top:135.40px;font-size:9.8px;color:#e4e4e4;font-weight:400;font-family:'Liberation Sans',sans-serif;font-style:normal;transform:scaleX(0.8789);-webkit-text-stroke:0.22px #e4e4e4;">Adobe Acrobat</span>
<span class="t" style="left:13.6px;top:160.30px;font-size:12.6px;color:#f2f2f2;font-weight:400;font-family:'Liberation Sans',sans-serif;font-style:normal;transform:scaleX(0.9285);-webkit-text-stroke:0.15px #f2f2f2;">EXP</span>
<span class="t" style="left:153px;top:158.40px;font-size:14px;color:#f2f2f2;font-weight:400;font-family:'Liberation Serif',serif;font-style:italic;transform:scaleX(1.4114);"><span style="font-size:13.5px">f</span><span style="font-size:10px">x</span></span>
<span class="t" style="left:191.5px;top:161.00px;font-size:14.6px;color:#f2f2f2;font-weight:400;font-family:'Liberation Mono',monospace;font-style:normal;transform:scaleX(0.9325);">=TEXTSPLIT(A2,{"/","-"})</span>
<span class="t" style="left:273.3px;top:208.20px;font-size:14.4px;color:#d6d6d6;font-weight:400;font-family:'Liberation Sans',sans-serif;font-style:normal;transform:scaleX(0.9886);">A</span>
<span class="t" style="left:599.8px;top:208.20px;font-size:14.4px;color:#f0f0f0;font-weight:400;font-family:'Liberation Sans',sans-serif;font-style:normal;transform:scaleX(0.9782);">B</span>
<span class="t" style="left:13.8px;top:231.85px;font-size:16px;color:#dedede;font-weight:400;font-family:'Liberation Sans',sans-serif;font-style:normal;transform:scaleX(0.9881);">1</span>
<span class="t" style="left:13.8px;top:256.10px;font-size:16px;color:#dedede;font-weight:400;font-family:'Liberation Sans',sans-serif;font-style:normal;transform:scaleX(0.9881);">2</span>
<span class="t" style="left:13.8px;top:280.45px;font-size:16px;color:#dedede;font-weight:400;font-family:'Liberation Sans',sans-serif;font-style:normal;transform:scaleX(0.9881);">3</span>
<span class="t" style="left:13.8px;top:304.85px;font-size:16px;color:#dedede;font-weight:400;font-family:'Liberation Sans',sans-serif;font-style:normal;transform:scaleX(0.9881);">4</span>
<span class="t" style="left:13.8px;top:329.35px;font-size:16px;color:#dedede;font-weight:400;font-family:'Liberation Sans',sans-serif;font-style:normal;transform:scaleX(0.9881);">5</span>
<span class="t" style="left:13.8px;top:353.95px;font-size:16px;color:#dedede;font-weight:400;font-family:'Liberation Sans',sans-serif;font-style:normal;transform:scaleX(0.9881);">6</span>
<span class="t" style="left:13.8px;top:378.45px;font-size:16px;color:#dedede;font-weight:400;font-family:'Liberation Sans',sans-serif;font-style:normal;transform:scaleX(0.9881);">7</span>
<span class="t" style="left:13.8px;top:402.90px;font-size:16px;color:#dedede;font-weight:400;font-family:'Liberation Sans',sans-serif;font-style:normal;transform:scaleX(0.9881);">8</span>
<span class="t" style="left:13.8px;top:427.45px;font-size:16px;color:#dedede;font-weight:400;font-family:'Liberation Sans',sans-serif;font-style:normal;transform:scaleX(0.9881);">9</span>
<span class="t" style="left:10.6px;top:451.70px;font-size:16px;color:#dedede;font-weight:400;font-family:'Liberation Sans',sans-serif;font-style:normal;transform:scaleX(0.8990);">10</span>
<span class="t" style="left:36.5px;top:232.55px;font-size:14.2px;color:#1a1208;font-weight:700;font-family:'Liberation Sans',sans-serif;font-style:normal;transform:scaleX(1.0483);">Patient</span>
<span class="t" style="left:91.0px;top:232.55px;font-size:14.2px;color:#1a1208;font-weight:700;font-family:'Liberation Sans',sans-serif;font-style:normal;transform:scaleX(1.2386);">name/</span>
<span class="t" style="left:147.0px;top:232.55px;font-size:14.2px;color:#1a1208;font-weight:700;font-family:'Liberation Sans',sans-serif;font-style:normal;transform:scaleX(1.1451);">Age/BP/</span>
<span class="t" style="left:210.2px;top:232.55px;font-size:14.2px;color:#1a1208;font-weight:700;font-family:'Liberation Sans',sans-serif;font-style:normal;transform:scaleX(1.1328);">Heart_problem/</span>
<span class="t" style="left:329.0px;top:232.55px;font-size:14.2px;color:#1a1208;font-weight:700;font-family:'Liberation Sans',sans-serif;font-style:normal;transform:scaleX(1.1219);">BMI-blood</span>
<span class="t" style="left:411.3px;top:232.55px;font-size:14.2px;color:#1a1208;font-weight:700;font-family:'Liberation Sans',sans-serif;font-style:normal;transform:scaleX(1.0526);">group</span>
<span class="t" style="left:459.2px;top:232.55px;font-size:14.2px;color:#1a1208;font-weight:700;font-family:'Liberation Sans',sans-serif;font-style:normal;transform:scaleX(1.0424);">level</span>
<span class="t" style="left:524.3px;top:232.55px;font-size:14.2px;color:#1a1208;font-weight:700;font-family:'Liberation Sans',sans-serif;font-style:normal;transform:scaleX(1.1024);">Formula</span>
<span class="t" style="left:36.5px;top:257.00px;font-size:14px;color:#1d1d1d;font-weight:400;font-family:'Liberation Sans',sans-serif;font-style:normal;transform:scaleX(1.1213);">NIEL</span>
<span class="t" style="left:76.5px;top:257.00px;font-size:14px;color:#1d1d1d;font-weight:400;font-family:'Liberation Sans',sans-serif;font-style:normal;transform:scaleX(1.1271);">FORD/</span>
<span class="t" style="left:129.8px;top:257.00px;font-size:14px;color:#1d1d1d;font-weight:400;font-family:'Liberation Sans',sans-serif;font-style:normal;transform:scaleX(1.2995);">81/</span>
<span class="t" style="left:159.0px;top:257.00px;font-size:14px;color:#1d1d1d;font-weight:400;font-family:'Liberation Sans',sans-serif;font-style:normal;transform:scaleX(1.3775);">1/</span>
<span class="t" style="left:179.0px;top:257.00px;font-size:14px;color:#1d1d1d;font-weight:400;font-family:'Liberation Sans',sans-serif;font-style:normal;transform:scaleX(1.2013);">1/0/26.91-142</span>
<span class="t" style="left:36.5px;top:281.35px;font-size:14px;color:#1d1d1d;font-weight:400;font-family:'Liberation Sans',sans-serif;font-style:normal;transform:scaleX(1.0479);">HARRY</span>
<span class="t" style="left:104.0px;top:281.35px;font-size:14px;color:#1d1d1d;font-weight:400;font-family:'Liberation Sans',sans-serif;font-style:normal;transform:scaleX(1.2490);">54/0/0/1/25.32-82</span>
<span class="t" style="left:36.5px;top:305.75px;font-size:14px;color:#1d1d1d;font-weight:400;font-family:'Liberation Sans',sans-serif;font-style:normal;transform:scaleX(1.0679);">ALBERT</span>
<span class="t" style="left:99.0px;top:305.75px;font-size:14px;color:#1d1d1d;font-weight:400;font-family:'Liberation Sans',sans-serif;font-style:normal;transform:scaleX(1.2599);">/28/0/1/0/24.45-159</span>
<span class="t" style="left:36.5px;top:330.25px;font-size:14px;color:#1d1d1d;font-weight:400;font-family:'Liberation Sans',sans-serif;font-style:normal;transform:scaleX(1.1047);">CHRISTOPHER/</span>
<span class="t" style="left:156.5px;top:330.25px;font-size:14px;color:#1d1d1d;font-weight:400;font-family:'Liberation Sans',sans-serif;font-style:normal;transform:scaleX(1.2395);">36/1/0/1/28.32-157</span>
<span class="t" style="left:36.5px;top:354.85px;font-size:14px;color:#1d1d1d;font-weight:400;font-family:'Liberation Sans',sans-serif;font-style:normal;transform:scaleX(1.1902);">PATRICH/</span>
<span class="t" style="left:115.2px;top:354.85px;font-size:14px;color:#1d1d1d;font-weight:400;font-family:'Liberation Sans',sans-serif;font-style:normal;transform:scaleX(1.2376);">76/1/0/0/34.32-211</span>
<span class="t" style="left:524.6px;top:259.10px;font-size:12px;color:#3e5a41;font-weight:400;font-family:'Liberation Sans',sans-serif;font-style:normal;transform:scaleX(1.3969);">=</span>
<span class="t" style="left:535.6px;top:256.90px;font-size:14.2px;color:#1d1d1d;font-weight:400;font-family:'Liberation Sans',sans-serif;font-style:normal;transform:scaleX(1.0818);">TEXTSPLIT(</span>
<span class="t" style="left:624px;top:256.90px;font-size:14.2px;color:#5b9bd5;font-weight:400;font-family:'Liberation Sans',sans-serif;font-style:normal;transform:scaleX(1.0369);">A2</span>
<span class="t" style="left:642.6px;top:256.90px;font-size:14.2px;color:#1d1d1d;font-weight:400;font-family:'Liberation Sans',sans-serif;font-style:normal;transform:scaleX(1.2605);">,{"/","-"}</span>
<span class="t" style="left:523.6px;top:281.25px;font-size:14.2px;color:#1d1d1d;font-weight:400;font-family:'Liberation Sans',sans-serif;font-style:normal;transform:scaleX(1.1828);">)</span>
<span class="t" style="left:100.5px;top:479.25px;font-size:11.5px;color:#2a2a2a;font-weight:400;font-family:'Liberation Sans',sans-serif;font-style:normal;transform:scaleX(0.9190);">Sheet1</span>
<span class="t" style="left:12.7px;top:505.70px;font-size:8.8px;color:#e4e4e4;font-weight:400;font-family:'Liberation Sans',sans-serif;font-style:normal;transform:scaleX(0.9425);-webkit-text-stroke:0.2px #e4e4e4;">Edit</span>
<span class="t" style="left:91px;top:505.70px;font-size:8.8px;color:#e4e4e4;font-weight:400;font-family:'Liberation Sans',sans-serif;font-style:normal;transform:scaleX(0.9551);-webkit-text-stroke:0.2px #e4e4e4;">Accessibility: Good to go</span>
<span class="t" style="left:685.5px;top:505.70px;font-size:8.8px;color:#7a7a7a;font-weight:400;font-family:'Liberation Sans',sans-serif;font-style:normal;transform:scaleX(0.9111);-webkit-text-stroke:0.2px #7a7a7a;">100%</span>
</div></body></html>
